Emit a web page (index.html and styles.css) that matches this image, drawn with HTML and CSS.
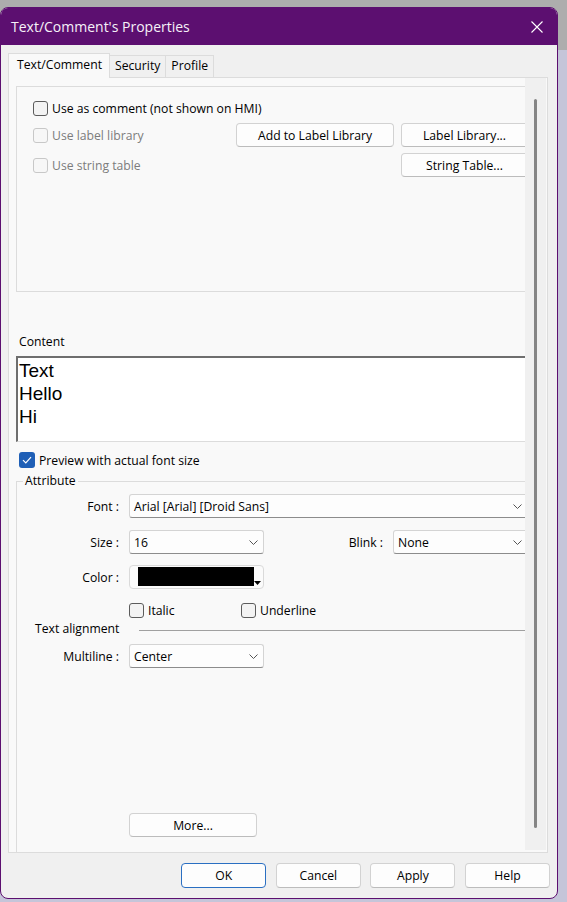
FILE: index.html
```html
<!DOCTYPE html>
<html>
<head>
<meta charset="utf-8">
<title>Text/Comment's Properties</title>
<link rel="stylesheet" href="styles.css">
</head>
<body>
<div class="window">
  <div class="titlebar">
    <span class="title">Text/Comment's Properties</span>
    <svg class="close" width="12" height="12" viewBox="0 0 12 12"><path d="M0.5 0.5 L11.5 11.5 M11.5 0.5 L0.5 11.5" stroke="#ffffff" stroke-width="1.1" fill="none"/></svg>
  </div>
  <div class="client">
    <div class="tabs">
      <div class="tab active">Text/Comment</div>
      <div class="tab">Security</div>
      <div class="tab">Profile</div>
    </div>
    <div class="panel">
      <div class="viewport">
        <div class="content">
          <div class="group">
            <div class="opt-grid">
              <label class="chk first"><span class="box"></span><span>Use as comment (not shown on HMI)</span></label>
              <label class="chk disabled"><span class="box"></span><span>Use label library</span></label>
              <button class="btn">Add to Label Library</button>
              <button class="btn">Label Library...</button>
              <label class="chk disabled"><span class="box"></span><span>Use string table</span></label>
              <span></span>
              <button class="btn">String Table...</button>
            </div>
          </div>

          <div class="content-label">Content</div>
          <div class="textbox">Text<br>Hello<br>Hi</div>

          <label class="chk preview"><span class="box checked"><svg width="10" height="8" viewBox="0 0 10 8"><path d="M1 4.2 L3.8 7 L9 1.2" stroke="#ffffff" stroke-width="1.2" fill="none"/></svg></span><span>Preview with actual font size</span></label>

          <fieldset class="attr">
            <legend>Attribute</legend>
            <div class="row r-font">
              <span class="lbl">Font :</span>
              <div class="combo span3"><span>Arial [Arial] [Droid Sans]</span><svg class="chev" width="9" height="5" viewBox="0 0 9 5"><path d="M0.5 0.5 L4.5 4.5 L8.5 0.5" stroke="#555555" stroke-width="1" fill="none"/></svg></div>
            </div>
            <div class="row r-size">
              <span class="lbl">Size :</span>
              <div class="combo"><span>16</span><svg class="chev" width="9" height="5" viewBox="0 0 9 5"><path d="M0.5 0.5 L4.5 4.5 L8.5 0.5" stroke="#555555" stroke-width="1" fill="none"/></svg></div>
              <span class="lbl">Blink :</span>
              <div class="combo"><span>None</span><svg class="chev" width="9" height="5" viewBox="0 0 9 5"><path d="M0.5 0.5 L4.5 4.5 L8.5 0.5" stroke="#555555" stroke-width="1" fill="none"/></svg></div>
            </div>
            <div class="row r-color">
              <span class="lbl">Color :</span>
              <div class="colorbtn"><span class="swatch"></span><svg class="tri" width="7" height="4" viewBox="0 0 7 4"><path d="M0 0 L7 0 L3.5 4 Z" fill="#000000"/></svg></div>
            </div>
            <div class="row r-style">
              <span></span>
              <div class="styles span3">
                <label class="chk italic"><span class="box"></span><span>Italic</span></label>
                <label class="chk"><span class="box"></span><span>Underline</span></label>
              </div>
            </div>
            <div class="align-head">
              <span>Text alignment</span>
              <span class="rule"></span>
            </div>
            <div class="row r-multi">
              <span class="lbl">Multiline :</span>
              <div class="combo"><span>Center</span><svg class="chev" width="9" height="5" viewBox="0 0 9 5"><path d="M0.5 0.5 L4.5 4.5 L8.5 0.5" stroke="#555555" stroke-width="1" fill="none"/></svg></div>
            </div>
            <div class="row r-more">
              <span></span>
              <button class="btn more">More...</button>
            </div>
          </fieldset>
        </div>
      </div>
      <div class="scrollbar"><div class="thumb"></div></div>
    </div>
    <div class="footer">
      <button class="btn dlg default">OK</button>
      <button class="btn dlg">Cancel</button>
      <button class="btn dlg">Apply</button>
      <button class="btn dlg">Help</button>
    </div>
  </div>
</div>
</body>
</html>
```

FILE: styles.css
```css
* { box-sizing: border-box; }
html, body { margin: 0; padding: 0; }
body {
  width: 567px;
  height: 902px;
  overflow: hidden;
  background: linear-gradient(to bottom, #adadad 0, #adadad 50px, #c5c5d9 50px);
  font-family: "Open Sans", "Noto Sans", sans-serif;
  font-size: 12.2px;
  color: #000000;
}
.window {
  margin-top: 7px;
  width: 558px;
  height: 892px;
  border: 1px solid #5c0f70;
  border-radius: 8px;
  overflow: hidden;
  background: #f0f0f0;
  display: flex;
  flex-direction: column;
}
.titlebar {
  flex: none;
  height: 37px;
  background: #5c0f70;
  color: #f6f2f8;
  display: flex;
  align-items: center;
  justify-content: space-between;
  padding: 0 14px 0 10px;
}
.title { font-size: 14px; }
.close { display: block; }
.client {
  flex: 1;
  display: flex;
  flex-direction: column;
}
.tabs {
  display: flex;
  align-items: flex-start;
  height: 25px;
  margin: 8px 0 -1px 7px;
  position: relative;
  z-index: 1;
}
.tab {
  height: 22px;
  margin-top: 2px;
  line-height: 20px;
  padding: 0 5px;
  background: #f0f0f0;
  border: 1px solid #dcdcdc;
  border-left: none;
  border-bottom: none;
}
.tab.active {
  height: 25px;
  margin-top: 0;
  line-height: 21px;
  padding: 0 7px 0 8px;
  background: #f9f9f9;
  border-left: 1px solid #dcdcdc;
}
.panel {
  margin-left: 7px;
  width: 540px;
  height: 776px;
  border: 1px solid #dcdcdc;
  background: #f9f9f9;
  display: flex;
}
.viewport {
  width: 516px;
  height: 774px;
  overflow: hidden;
}
.content {
  width: 545px;
  padding: 8px 0 0 7px;
}
.scrollbar {
  width: 21px;
  height: 772px;
  background: #f0f0f0;
  padding: 21px 0 0 9px;
}
.thumb {
  width: 3px;
  height: 729px;
  border-radius: 1.5px;
  background: #858585;
}
.group {
  height: 206px;
  border: 1px solid #dcdcdc;
  padding: 13px 0 0 16px;
}
.opt-grid {
  display: grid;
  grid-template-columns: 196px 158px 127px;
  grid-template-rows: 17px 24px 24px;
  column-gap: 7px;
  row-gap: 6px;
  align-items: center;
}
.opt-grid .first { grid-column: 1 / 4; align-self: start; }
.chk {
  display: flex;
  align-items: center;
  gap: 4px;
  white-space: nowrap;
}
.box {
  flex: none;
  width: 15px;
  height: 15px;
  border: 1px solid #5c5c5c;
  border-radius: 3px;
  background: #f3f3f3;
  display: flex;
  align-items: center;
  justify-content: center;
}
.chk.disabled { color: #7c7c7c; }
.chk.disabled .box { border-color: #c8c8c8; background: #f7f7f7; }
.box.checked {
  width: 16px;
  height: 16px;
  border: none;
  background: #1f5fb6;
}
.box.checked svg { display: block; }
.btn {
  font: inherit;
  color: #000000;
  height: 24px;
  padding: 0;
  background: #fdfdfd;
  border: 1px solid #d2d2d2;
  border-bottom-color: #bcbcbc;
  border-radius: 4px;
  white-space: nowrap;
}
.content-label {
  margin-top: 42px;
  padding-left: 3px;
  line-height: 16px;
}
.textbox {
  margin-top: 6px;
  height: 86px;
  background: #ffffff;
  border-top: 2px solid #6e6e6e;
  border-left: 2px solid #6e6e6e;
  border-bottom: 1px solid #dcdcdc;
  padding: 1px 0 0 1px;
  font-family: "Liberation Sans", Arial, sans-serif;
  font-size: 19px;
  line-height: 23px;
}
.preview {
  margin-top: 10px;
  height: 16px;
  padding-left: 3px;
}
.attr {
  margin: 5px 0 0 0;
  padding: 5px 0 30px 0;
  border: 1px solid #dcdcdc;
  min-width: 0;
}
.attr legend {
  margin-left: 6px;
  padding: 0 2px;
  line-height: 16px;
}
.row {
  display: grid;
  grid-template-columns: 102px 135px 109px 135px;
  column-gap: 10px;
  align-items: center;
  height: 24px;
}
.lbl { text-align: right; white-space: nowrap; }
.span3 { grid-column: 2 / 5; }
.r-size { margin-top: 12px; }
.r-color { margin-top: 11px; }
.r-style { margin-top: 13px; height: 15px; }
.r-multi { margin-top: 8px; }
.r-more { margin-top: 145px; }
.combo {
  height: 24px;
  background: #fdfdfd;
  border: 1px solid #d4d4d4;
  border-bottom-color: #8c8c8c;
  border-radius: 3px;
  display: flex;
  align-items: center;
  justify-content: space-between;
  padding: 0 5px 0 4px;
  white-space: nowrap;
}
.chev { display: block; flex: none; }
.colorbtn {
  height: 24px;
  background: #fbfbfb;
  border: 1px solid #dadada;
  border-radius: 4px;
  display: flex;
  align-items: flex-end;
  padding: 1px 2px 2px 8px;
}
.swatch {
  display: block;
  width: 116px;
  height: 19px;
  background: #000000;
  align-self: flex-start;
}
.tri { display: block; flex: none; margin-bottom: 1px; }
.styles { display: flex; align-items: center; }
.italic { width: 112px; }
.align-head {
  margin-top: 3px;
  height: 16px;
  display: flex;
  align-items: center;
  padding-left: 18px;
}
.align-head .rule {
  flex: 1;
  height: 1px;
  margin: 4px 0 0 20px;
  background: #a0a0a0;
}
.more { width: 128px; }
.footer {
  margin-top: 10px;
  display: flex;
  justify-content: flex-end;
  gap: 9.6px;
  padding-right: 7px;
}
.dlg { width: 85px; height: 25px; }
.dlg.default { border: 1px solid #2a6fc2; }
```
